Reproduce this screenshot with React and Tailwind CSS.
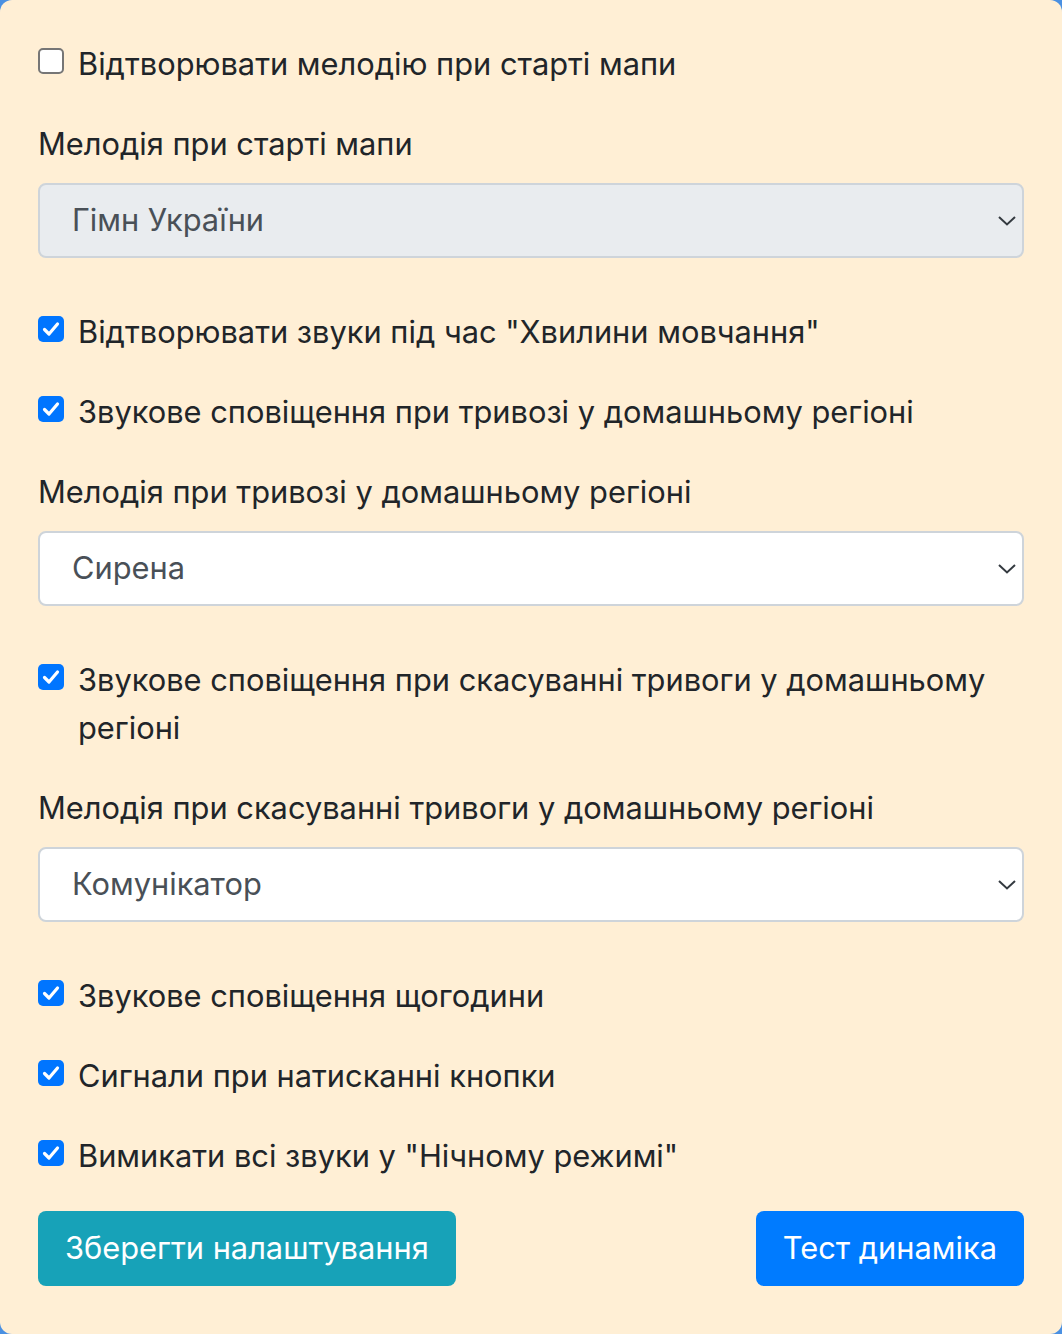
import React from "react";

const font = { fontFamily: "Inter, 'Noto Sans', sans-serif" };

function Check({ checked }) {
  if (!checked) {
    return (
      <span className="mt-[8px] flex h-[26px] w-[26px] shrink-0 items-center justify-center rounded-[5px] border-2 border-[#767676] bg-white" />
    );
  }
  return (
    <span className="mt-[8px] flex h-[26px] w-[26px] shrink-0 items-center justify-center rounded-[5px] bg-[#0075ff]">
      <svg width="20" height="20" viewBox="0 0 20 20" fill="none">
        <path d="M3.5 10.5 L8 15 L16.5 5" stroke="white" strokeWidth="3.2" strokeLinecap="round" strokeLinejoin="round" />
      </svg>
    </span>
  );
}

function CheckRow({ checked, children }) {
  return (
    <div className="flex items-start gap-[14px]">
      <Check checked={checked} />
      <span className="leading-[48px]">{children}</span>
    </div>
  );
}

function Select({ value, disabled }) {
  return (
    <div
      className={
        "mt-[15px] flex h-[75px] items-center justify-between rounded-[8px] border-2 border-[#ced4da] pl-[32px] pr-[6px] text-[#495057] " +
        (disabled ? "bg-[#e9ecef]" : "bg-white")
      }
    >
      <span>{value}</span>
      <svg width="18" height="10" viewBox="0 0 18 10" fill="none">
        <path d="M1 1 L9 8.5 L17 1" stroke="#343a40" strokeWidth="2" />
      </svg>
    </div>
  );
}

export default function App() {
  return (
    <div className="min-h-[1334px] w-full bg-[#4a90e2]" style={font}>
      <div className="min-h-[1334px] rounded-[12px] bg-[#ffefd5] px-[38px] pb-[48px] pt-[40px] text-[30.8px] text-[#212529]">
        <CheckRow checked={false}>Відтворювати мелодію при старті мапи</CheckRow>
        <div className="mt-[32px] leading-[48px]">Мелодія при старті мапи</div>
        <Select value="Гімн України" disabled />
        <div className="mt-[50px]">
          <CheckRow checked>Відтворювати звуки під час "Хвилини мовчання"</CheckRow>
        </div>
        <div className="mt-[32px]">
          <CheckRow checked>Звукове сповіщення при тривозі у домашньому регіоні</CheckRow>
        </div>
        <div className="mt-[32px] leading-[48px]">Мелодія при тривозі у домашньому регіоні</div>
        <Select value="Сирена" />
        <div className="mt-[50px]">
          <CheckRow checked>Звукове сповіщення при скасуванні тривоги у домашньому регіоні</CheckRow>
        </div>
        <div className="mt-[32px] leading-[48px]">Мелодія при скасуванні тривоги у домашньому регіоні</div>
        <Select value="Комунікатор" />
        <div className="mt-[50px]">
          <CheckRow checked>Звукове сповіщення щогодини</CheckRow>
        </div>
        <div className="mt-[32px]">
          <CheckRow checked>Сигнали при натисканні кнопки</CheckRow>
        </div>
        <div className="mt-[32px]">
          <CheckRow checked>Вимикати всі звуки у "Нічному режимі"</CheckRow>
        </div>
        <div className="mt-[31px] flex items-center justify-between">
          <button className="h-[75px] rounded-[8px] bg-[#17a2b8] px-[27px] text-white">Зберегти налаштування</button>
          <button className="h-[75px] rounded-[8px] bg-[#007bff] px-[27px] text-white">Тест динаміка</button>
        </div>
      </div>
    </div>
  );
}
